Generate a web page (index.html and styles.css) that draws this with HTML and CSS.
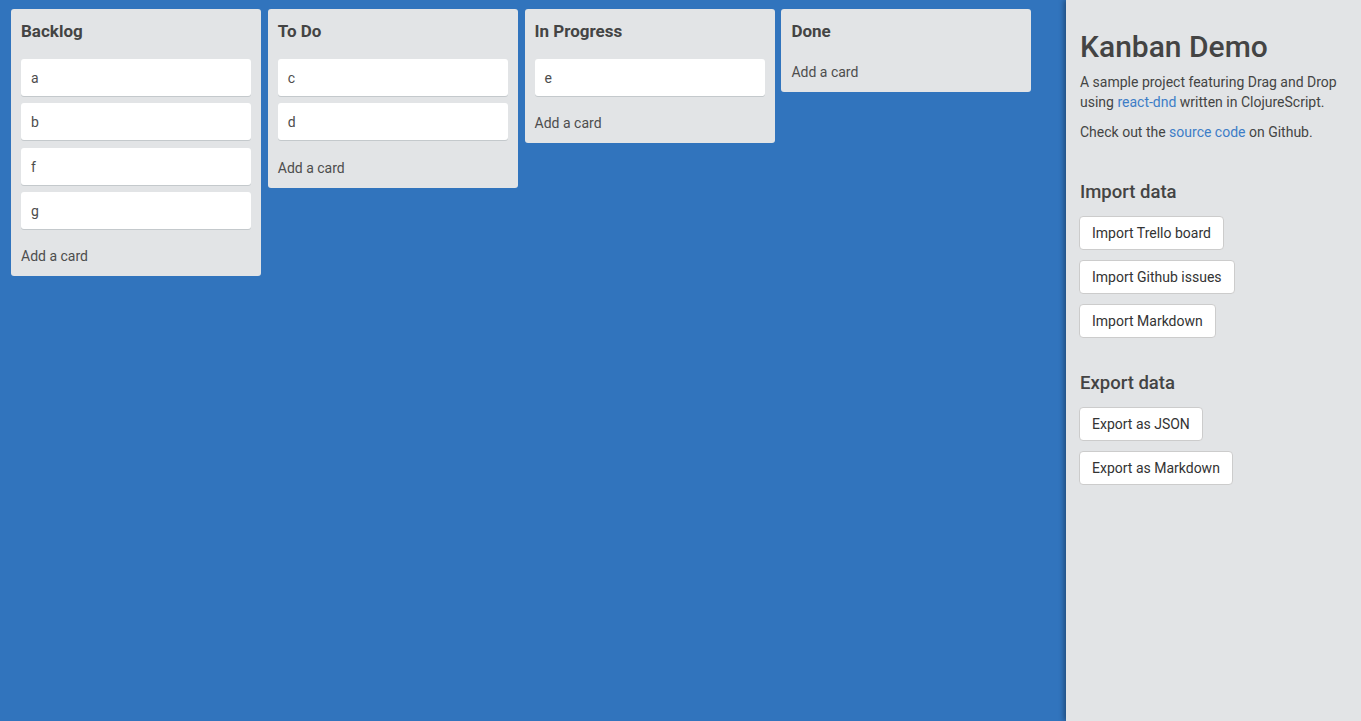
FILE: index.html
```html
<!DOCTYPE html>
<html>
<head>
<meta charset="utf-8">
<title>Kanban Demo</title>
<link rel="stylesheet" href="styles.css">
</head>
<body>
<div class="app">
  <div class="board">
    <div class="list">
      <h3 class="list-title">Backlog</h3>
      <div class="cards">
        <div class="card">a</div>
        <div class="card">b</div>
        <div class="card">f</div>
        <div class="card">g</div>
      </div>
      <div class="add-card">Add a card</div>
    </div>
    <div class="list">
      <h3 class="list-title">To Do</h3>
      <div class="cards">
        <div class="card">c</div>
        <div class="card">d</div>
      </div>
      <div class="add-card">Add a card</div>
    </div>
    <div class="list">
      <h3 class="list-title">In Progress</h3>
      <div class="cards">
        <div class="card">e</div>
      </div>
      <div class="add-card">Add a card</div>
    </div>
    <div class="list">
      <h3 class="list-title">Done</h3>
      <div class="add-card">Add a card</div>
    </div>
  </div>
  <aside class="sidebar">
    <h1 class="title">Kanban Demo</h1>
    <p class="text">A sample project featuring Drag and Drop using <a class="link" href="#">react-dnd</a> written in ClojureScript.</p>
    <p class="text">Check out the <a class="link" href="#">source code</a> on Github.</p>
    <div class="section section-import">
      <h4 class="section-title">Import data</h4>
      <div class="btn-row"><button class="btn">Import Trello board</button></div>
      <div class="btn-row"><button class="btn">Import Github issues</button></div>
      <div class="btn-row"><button class="btn">Import Markdown</button></div>
    </div>
    <div class="section section-export">
      <h4 class="section-title">Export data</h4>
      <div class="btn-row"><button class="btn">Export as JSON</button></div>
      <div class="btn-row"><button class="btn">Export as Markdown</button></div>
    </div>
  </aside>
</div>
</body>
</html>
```
FILE: styles.css
```css
* { box-sizing: border-box; }
html, body {
  margin: 0;
  padding: 0;
  height: 100%;
}
body {
  font-family: Roboto, "Liberation Sans", sans-serif;
  font-size: 14px;
  line-height: 20px;
  color: #444;
  background: #3174bd;
  overflow: hidden;
}
.app {
  display: flex;
  height: 721px;
}
.board {
  flex: 1;
  display: flex;
  align-items: flex-start;
  gap: 6.8px;
  padding: 9px 0 0 11px;
}
.list {
  width: 250px;
  flex: 0 0 250px;
  background: #e2e4e6;
  border-radius: 3px;
  padding: 10px;
}
.list-title {
  margin: 0 0 16px;
  font-size: 17px;
  line-height: 24px;
  font-weight: 700;
  color: #444;
}
.cards {
  padding-bottom: 7px;
}
.card {
  background: #fff;
  border-radius: 3px;
  box-shadow: 0 1px 0 #c4c9cc;
  padding: 9px 10px 8px;
  margin-bottom: 7.33px;
  color: #4d4d4d;
  font-size: 14px;
  line-height: 20px;
}
.add-card {
  padding-top: 3px;
  font-size: 14px;
  line-height: 20px;
  color: #4d4d4d;
}
.sidebar {
  width: 295px;
  flex: 0 0 295px;
  background: #e2e4e6;
  box-shadow: -2px 0 5px rgba(0, 0, 0, 0.35);
  padding: 0 14px;
  position: relative;
}
.title {
  margin: 30px 0 9px;
  font-size: 30px;
  line-height: 33px;
  font-weight: 500;
  color: #444;
}
.text {
  margin: 0 0 10px;
  font-size: 14px;
  line-height: 20px;
  color: #444;
}
.link {
  color: #3d7dc6;
  text-decoration: none;
}
.section-title {
  margin: 0 0 14px;
  font-size: 18.5px;
  line-height: 20px;
  font-weight: 500;
  color: #444;
}
.section-import {
  margin-top: 40px;
}
.section-export {
  margin-top: 35px;
}
.btn-row {
  margin-bottom: 10px;
}
.btn-row:last-child {
  margin-bottom: 0;
}
.btn {
  font-family: Roboto, "Liberation Sans", sans-serif;
  font-size: 14px;
  line-height: 20px;
  color: #333;
  background: #fff;
  border: 1px solid #ccc;
  border-radius: 4px;
  padding: 6px 12px;
  margin: 0 0 0 -1px;
  cursor: pointer;
}
```
